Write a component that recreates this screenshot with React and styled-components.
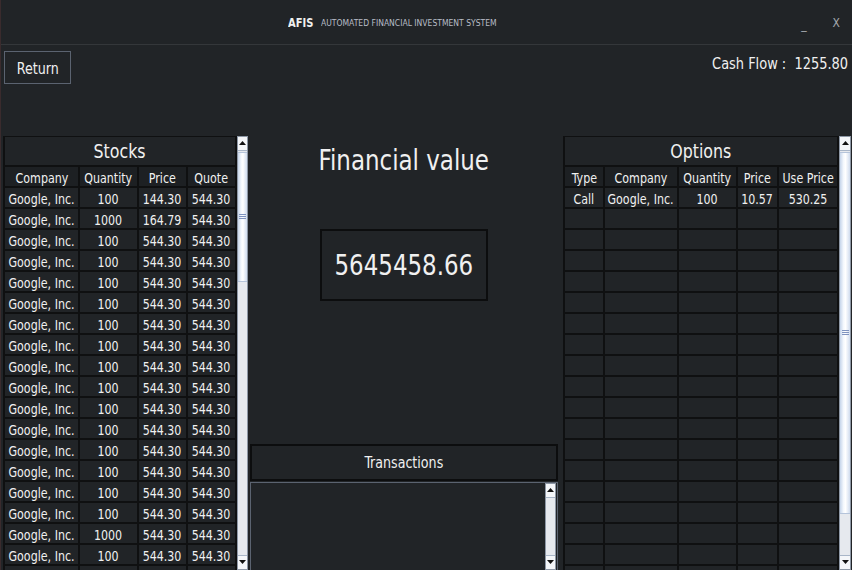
import React from "react";
import styled, { createGlobalStyle } from "styled-components";

const Global = createGlobalStyle`
  html, body { margin: 0; padding: 0; background: #212427; }
  body { font-family: "DejaVu Sans Condensed", "DejaVu Sans", sans-serif; font-stretch: condensed; color: #f0f0f0; }
`;

const Txt = styled.span`
  display: inline-block;
  white-space: pre;
  flex: none;
  transform: scaleX(${(p) => p.$s || 0.88});
  transform-origin: ${(p) => p.$o || "center"};
`;

const Window = styled.div`
  width: 852px;
  height: 570px;
  overflow: hidden;
  background: #212427;
  display: flex;
  flex-direction: column;
  border-left: 1px solid #3a2b2d;
  box-sizing: border-box;
`;

const TitleBar = styled.div`
  height: 45px;
  flex: none;
  border-bottom: 1px solid #34373a;
  display: flex;
  align-items: center;
  padding-left: 287px;
  padding-top: 1px;
  box-sizing: border-box;
`;

const AppName = styled.span`
  font-weight: bold;
  font-size: 12px;
  color: #f0f0f0;
  margin-right: 5px;
  display: inline-block;
  transform: scaleX(0.92);
  transform-origin: left;
`;

const AppSub = styled.span`
  font-size: 9.5px;
  color: #b7bcc6;
  display: inline-block;
  transform: scaleX(0.895);
  transform-origin: left;
`;

const WinButtons = styled.div`
  margin-left: auto;
  display: flex;
  gap: 26px;
  padding-right: 12px;
  font-size: 12px;
  color: #a3a7ad;
`;

const WinBtn = styled.span`
  display: inline-block;
  transform: translateY(${(p) => p.$dy || 0}px);
`;

const TopRow = styled.div`
  height: 91px;
  flex: none;
  display: flex;
  align-items: flex-start;
  justify-content: space-between;
  padding: 6px 4px 0 3px;
  box-sizing: border-box;
`;

const ReturnButton = styled.button`
  font-family: inherit;
  font-size: 16px;
  color: #f0f0f0;
  background: #212427;
  border: 1px solid #5b6370;
  height: 33px;
  width: 67px;
  padding: 1px 0 0;
  cursor: pointer;
  display: flex;
  align-items: center;
  justify-content: center;
`;

const CashFlow = styled.div`
  font-size: 16px;
  padding-top: 3px;
  display: flex;
  justify-content: flex-end;
`;

const Main = styled.div`
  flex: 1;
  display: flex;
  min-height: 0;
`;

const SidePanel = styled.div`
  display: flex;
  margin-left: ${(p) => p.$ml}px;
  height: 100%;
`;

const Table = styled.div`
  display: grid;
  grid-template-columns: ${(p) => p.$cols};
  grid-template-rows: 28px 19px;
  grid-auto-rows: 19px;
  gap: 2px;
  padding: 1px 2px 2px 2px;
  background: #0f1011;
  align-content: start;
  height: 100%;
  box-sizing: border-box;
  overflow: hidden;
`;

const TableTitle = styled.div`
  grid-column: 1 / -1;
  background: #212427;
  display: flex;
  align-items: center;
  justify-content: center;
  font-size: 20px;
`;

const Cell = styled.div`
  background: ${(p) => (p.$head ? "#1d2023" : "#212427")};
  display: flex;
  align-items: center;
  justify-content: center;
  font-size: 14px;
  white-space: nowrap;
  overflow: hidden;
  line-height: 1;
  padding-top: 2px;
  box-sizing: border-box;
`;

const Scrollbar = styled.div`
  width: ${(p) => p.$w || 11}px;
  height: 100%;
  background: #e6e9ee;
  border: 1px solid #8d97a5;
  box-sizing: border-box;
  display: flex;
  flex-direction: column;
  flex: none;
`;

const ArrowBtn = styled.div`
  height: 13px;
  flex: none;
  background: #f4f6f9;
  border-bottom: ${(p) => (p.$down ? "none" : "1px solid #a9b6c8")};
  border-top: ${(p) => (p.$down ? "1px solid #a9b6c8" : "none")};
  display: flex;
  align-items: center;
  justify-content: center;
  margin-top: ${(p) => (p.$down ? "auto" : "0")};
`;

const Thumb = styled.div`
  height: ${(p) => p.$h}px;
  flex: none;
  margin: 1px 0;
  background: linear-gradient(to right, #c6d5ea 0%, #f4f8fd 35%, #ffffff 55%, #d0dcee 100%);
  border-top: 1px solid #b5c4da;
  border-bottom: 1px solid #b5c4da;
  display: flex;
  align-items: center;
  justify-content: center;
`;

const Grip = styled.div`
  width: 7px;
  height: 6px;
  background: repeating-linear-gradient(to bottom, #7f93bf 0 1px, transparent 1px 2px);
`;

const Center = styled.div`
  width: 308px;
  margin-left: 2px;
  flex: none;
  display: flex;
  flex-direction: column;
  align-items: center;
`;

const BigTitle = styled.div`
  font-size: 29px;
  margin-top: 7px;
  height: 35px;
  line-height: 35px;
  display: flex;
  justify-content: center;
`;

const ValueBox = styled.div`
  width: 168px;
  height: 72px;
  box-sizing: border-box;
  border: 2px solid #0c0d0e;
  margin-top: 51px;
  display: flex;
  align-items: center;
  justify-content: center;
  font-size: 29px;
`;

const TransHeader = styled.div`
  margin-top: auto;
  width: 100%;
  height: 37px;
  box-sizing: border-box;
  border: 2px solid #0c0d0e;
  display: flex;
  align-items: center;
  justify-content: center;
  font-size: 16px;
`;

const TransArea = styled.div`
  width: 100%;
  height: 88px;
  flex: none;
  margin-top: 1px;
  box-sizing: border-box;
  border: 1px solid #5b6370;
  border-bottom: none;
  display: flex;
  justify-content: flex-end;
  padding-right: 1px;
`;

const Arrow = ({ down }) => (
  <svg width="7" height="5" viewBox="0 0 7 5">
    <polygon points={down ? "0,0 7,0 3.5,4" : "0,4 7,4 3.5,0"} fill="#111" />
  </svg>
);

const stockRows = [
  ["Google, Inc.", "100", "144.30", "544.30"],
  ["Google, Inc.", "1000", "164.79", "544.30"],
  ...Array.from({ length: 14 }, () => ["Google, Inc.", "100", "544.30", "544.30"]),
  ["Google, Inc.", "1000", "544.30", "544.30"],
  ["Google, Inc.", "100", "544.30", "544.30"],
  ["Google, Inc.", "100", "544.30", "544.30"],
];

const optionRows = [
  ["Call", "Google, Inc.", "100", "10.57", "530.25"],
  ...Array.from({ length: 19 }, () => ["", "", "", "", ""]),
];

const DataTable = ({ title, cols, head, rows }) => (
  <Table $cols={cols}>
    <TableTitle>
      <Txt>{title}</Txt>
    </TableTitle>
    {head.map((h) => (
      <Cell key={h} $head>
        <Txt>{h}</Txt>
      </Cell>
    ))}
    {rows.map((r, i) =>
      r.map((c, j) => (
        <Cell key={i + "-" + j}>
          <Txt>{c}</Txt>
        </Cell>
      ))
    )}
  </Table>
);

export default function App() {
  return (
    <>
      <Global />
      <Window>
        <TitleBar>
          <AppName>AFIS</AppName>
          <AppSub>AUTOMATED FINANCIAL INVESTMENT SYSTEM</AppSub>
          <WinButtons>
            <WinBtn $dy={2}>_</WinBtn>
            <WinBtn>X</WinBtn>
          </WinButtons>
        </TitleBar>
        <TopRow>
          <ReturnButton>
            <Txt>Return</Txt>
          </ReturnButton>
          <CashFlow>
            <Txt $o="right" $s={0.9}>{"Cash Flow :  1255.80"}</Txt>
          </CashFlow>
        </TopRow>
        <Main>
          <SidePanel $ml={2}>
            <DataTable
              title="Stocks"
              cols="73px 57px 47px 47px"
              head={["Company", "Quantity", "Price", "Quote"]}
              rows={stockRows}
            />
            <Scrollbar>
              <ArrowBtn>
                <Arrow />
              </ArrowBtn>
              <Thumb $h={128}>
                <Grip />
              </Thumb>
              <ArrowBtn $down>
                <Arrow down />
              </ArrowBtn>
            </Scrollbar>
          </SidePanel>
          <Center>
            <BigTitle>
              <Txt>Financial value</Txt>
            </BigTitle>
            <ValueBox>
              <Txt>5645458.66</Txt>
            </ValueBox>
            <TransHeader>
              <Txt>Transactions</Txt>
            </TransHeader>
            <TransArea>
              <Scrollbar>
                <ArrowBtn>
                  <Arrow />
                </ArrowBtn>
                <ArrowBtn $down>
                  <Arrow down />
                </ArrowBtn>
              </Scrollbar>
            </TransArea>
          </Center>
          <SidePanel $ml={5}>
            <DataTable
              title="Options"
              cols="38px 72px 57px 39px 58px"
              head={["Type", "Company", "Quantity", "Price", "Use Price"]}
              rows={optionRows}
            />
            <Scrollbar $w={12}>
              <ArrowBtn>
                <Arrow />
              </ArrowBtn>
              <Thumb $h={360}>
                <Grip />
              </Thumb>
              <ArrowBtn $down>
                <Arrow down />
              </ArrowBtn>
            </Scrollbar>
          </SidePanel>
        </Main>
      </Window>
    </>
  );
}
